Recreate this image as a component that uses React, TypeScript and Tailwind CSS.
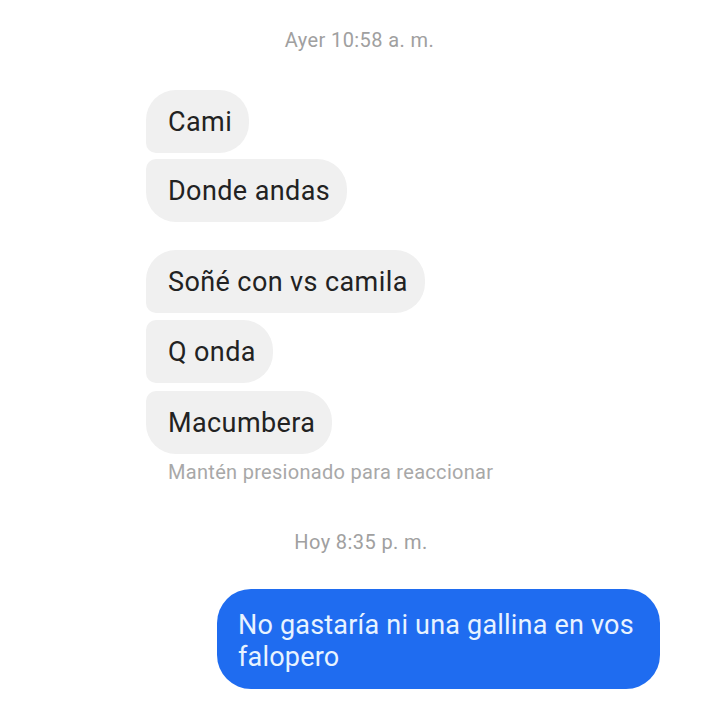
import React from "react";

const Bubble = ({ text, className = "" }: { text: string; className?: string }) => (
  <div className={`self-start bg-[#f0f0f0] text-[#222222] text-[27px] tracking-[0.4px] leading-[64px] h-[63px] pl-[22px] pr-[17px] ${className}`}>
    {text}
  </div>
);

export default function App() {
  return (
    <div className="w-[720px] h-[720px] bg-white overflow-hidden flex flex-col" style={{ fontFamily: "Roboto, 'Noto Sans', sans-serif" }}>
      <div className="pt-[27px] text-center text-[20px] tracking-[0.4px] leading-[26px] text-[#a0a0a0] pr-[1px]">Ayer 10:58 a. m.</div>
      <div className="flex flex-col pl-[146px] mt-[37px]">
        <Bubble text="Cami" className="rounded-tl-[30px] rounded-tr-[30px] rounded-br-[30px] rounded-bl-[10px]" />
        <Bubble text="Donde andas" className="mt-[6px] rounded-tl-[10px] rounded-tr-[30px] rounded-br-[30px] rounded-bl-[30px]" />
        <Bubble text="Soñé con vs camila" className="mt-[28px] rounded-tl-[30px] rounded-tr-[30px] rounded-br-[30px] rounded-bl-[10px]" />
        <Bubble text="Q onda" className="mt-[7px] rounded-tl-[10px] rounded-tr-[30px] rounded-br-[30px] rounded-bl-[10px]" />
        <Bubble text="Macumbera" className="mt-[8px] rounded-tl-[10px] rounded-tr-[30px] rounded-br-[30px] rounded-bl-[30px]" />
        <div className="mt-[6px] pl-[22px] text-[20px] tracking-[0.3px] leading-[24px] text-[#a8a8a8]">Mantén presionado para reaccionar</div>
      </div>
      <div className="mt-[46px] text-center text-[20px] tracking-[0.4px] leading-[24px] text-[#a0a0a0] pl-[2px]">Hoy 8:35 p. m.</div>
      <div className="flex justify-end pr-[60px] mt-[35px]">
        <div className="w-[443px] h-[100px] rounded-[34px] bg-[#1f6cf0] text-[#e8f3ff] text-[27px] tracking-[0.2px] leading-[32px] pl-[21px] pr-[12px] pt-[20px]">
          No gastaría ni una gallina en vos falopero
        </div>
      </div>
    </div>
  );
}
